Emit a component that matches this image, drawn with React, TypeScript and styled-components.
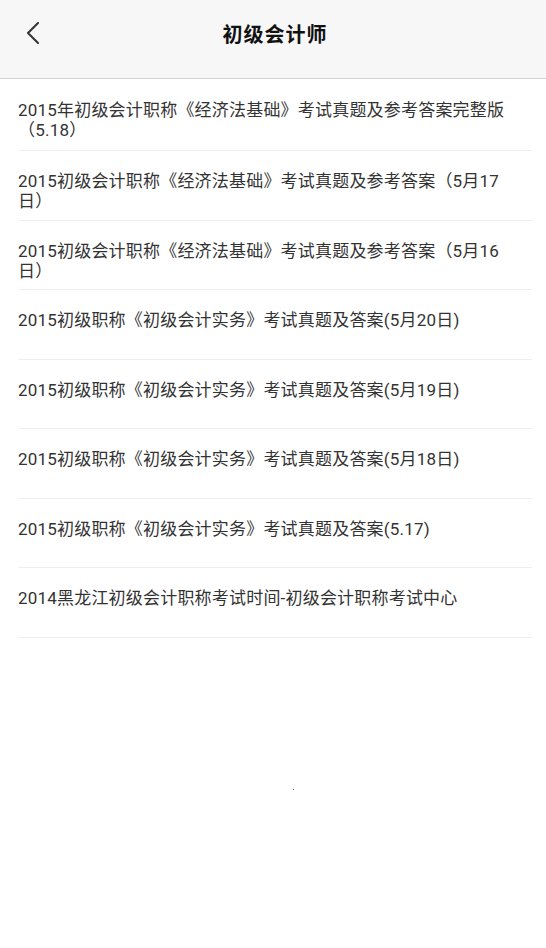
import React from "react";
import styled, { createGlobalStyle } from "styled-components";

const GlobalStyle = createGlobalStyle`
  html, body {
    margin: 0;
    padding: 0;
    background: #ffffff;
  }
  body {
    font-family: Roboto, "Noto Sans CJK SC", "Noto Sans", sans-serif;
    -webkit-font-smoothing: antialiased;
  }
  * { box-sizing: border-box; }
`;

const Page = styled.div`
  width: 546px;
  min-height: 948px;
  background: #ffffff;
  display: flex;
  flex-direction: column;
`;

const Header = styled.header`
  height: 79px;
  background: #f7f7f7;
  border-bottom: 1px solid #d4d4d4;
  display: grid;
  grid-template-columns: 80px 1fr 80px;
  align-items: center;
  padding-bottom: 12px;
`;

const BackButton = styled.button`
  border: 0;
  background: transparent;
  padding: 0 0 0 26px;
  height: 24px;
  display: flex;
  align-items: center;
  cursor: pointer;
`;

const Title = styled.h1`
  margin: 0;
  text-align: center;
  font-family: Roboto, "Noto Sans CJK SC", sans-serif;
  font-weight: 700;
  font-size: 20px;
  color: #111111;
  letter-spacing: 1px;
  padding-left: 4px;
`;

const List = styled.ul`
  list-style: none;
  margin: 0;
  padding: 0 14px 0 18px;
`;

const Row = styled.li<{ $first?: boolean }>`
  height: ${(p) => (p.$first ? "72px" : "69.5px")};
  padding-top: ${(p) => (p.$first ? "21px" : "20px")};
  border-bottom: 1px solid #efefef;
`;

const RowText = styled.a`
  display: block;
  max-width: 494px;
  font-size: 17px;
  line-height: 20px;
  letter-spacing: 0.2px;
  color: #333333;
  text-decoration: none;
  font-family: Roboto, "Noto Sans CJK SC", sans-serif;
`;

const Footer = styled.div`
  padding: 151px 0 0 293px;
`;

const Dot = styled.span`
  display: block;
  width: 1px;
  height: 1px;
  background: #777;
`;

const items = [
  "2015年初级会计职称《经济法基础》考试真题及参考答案完整版（5.18）",
  "2015初级会计职称《经济法基础》考试真题及参考答案（5月17日）",
  "2015初级会计职称《经济法基础》考试真题及参考答案（5月16日）",
  "2015初级职称《初级会计实务》考试真题及答案(5月20日)",
  "2015初级职称《初级会计实务》考试真题及答案(5月19日)",
  "2015初级职称《初级会计实务》考试真题及答案(5月18日)",
  "2015初级职称《初级会计实务》考试真题及答案(5.17)",
  "2014黑龙江初级会计职称考试时间-初级会计职称考试中心",
];

export default function App() {
  return (
    <Page>
      <GlobalStyle />
      <Header>
        <BackButton aria-label="返回">
          <svg width="14" height="22" viewBox="0 0 14 22">
            <polyline
              points="12,1 2,11 12,21"
              fill="none"
              stroke="#333"
              strokeWidth="2"
              strokeLinecap="round"
              strokeLinejoin="round"
            />
          </svg>
        </BackButton>
        <Title>初级会计师</Title>
        <span />
      </Header>
      <List>
        {items.map((t, i) => (
          <Row key={i} $first={i === 0}>
            <RowText href="#">{t}</RowText>
          </Row>
        ))}
      </List>
      <Footer>
        <Dot />
      </Footer>
    </Page>
  );
}
